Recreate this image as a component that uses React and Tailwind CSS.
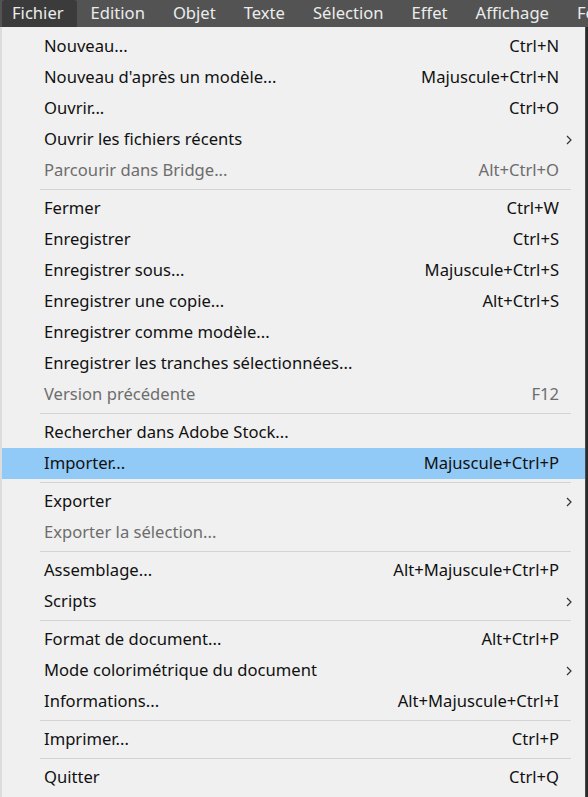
import React from "react";

const groups = [
  [
    ["Nouveau...", "Ctrl+N"],
    ["Nouveau d'après un modèle...", "Majuscule+Ctrl+N"],
    ["Ouvrir...", "Ctrl+O"],
    ["Ouvrir les fichiers récents", null, "sub"],
    ["Parcourir dans Bridge...", "Alt+Ctrl+O", "dis"],
  ],
  [
    ["Fermer", "Ctrl+W"],
    ["Enregistrer", "Ctrl+S"],
    ["Enregistrer sous...", "Majuscule+Ctrl+S"],
    ["Enregistrer une copie...", "Alt+Ctrl+S"],
    ["Enregistrer comme modèle..."],
    ["Enregistrer les tranches sélectionnées..."],
    ["Version précédente", "F12", "dis"],
  ],
  [
    ["Rechercher dans Adobe Stock..."],
    ["Importer...", "Majuscule+Ctrl+P", "hl"],
  ],
  [
    ["Exporter", null, "sub"],
    ["Exporter la sélection...", null, "dis"],
  ],
  [
    ["Assemblage...", "Alt+Majuscule+Ctrl+P"],
    ["Scripts", null, "sub"],
  ],
  [
    ["Format de document...", "Alt+Ctrl+P"],
    ["Mode colorimétrique du document", null, "sub"],
    ["Informations...", "Alt+Majuscule+Ctrl+I"],
  ],
  [["Imprimer...", "Ctrl+P"]],
  [["Quitter", "Ctrl+Q"]],
];

const menus = ["Fichier", "Edition", "Objet", "Texte", "Sélection", "Effet", "Affichage", "Fenêtre"];

function Chevron() {
  return (
    <svg width="8" height="12" viewBox="0 0 8 12" className="block">
      <path d="M2 2 L6 6 L2 10" fill="none" stroke="#333" strokeWidth="1.2" />
    </svg>
  );
}

function Row({ label, sc, kind }) {
  const dis = kind === "dis";
  const hl = kind === "hl";
  return (
    <div
      className={`h-[31px] flex items-center pl-[42px] pr-[26px] ${hl ? "bg-[#91c9f7]" : ""} ${dis ? "text-[#6d6d6d]" : "text-[#111]"}`}
    >
      <span className="flex-1 whitespace-nowrap">{label}</span>
      {sc && <span className="whitespace-nowrap">{sc}</span>}
      {kind === "sub" && (
        <span className="mr-[-14px]">
          <Chevron />
        </span>
      )}
    </div>
  );
}

export default function App() {
  return (
    <div
      className="w-[588px] h-[797px] bg-[#2a2a2a] overflow-hidden text-[16.6px]"
      style={{ fontFamily: '"Noto Sans", "Open Sans", sans-serif' }}
    >
      <div className="h-[27px] bg-[#535353] flex items-center pl-[2px] text-[#ececec] whitespace-nowrap overflow-hidden">
        {menus.map((m, i) => (
          <div
            key={m}
            className={`h-[27px] shrink-0 flex items-center ${i === 0 ? "bg-[#3b3b3b] pl-[10px] pr-[13px] rounded-t-[3px]" : "px-[14px]"}`}
          >
            {m}
          </div>
        ))}
      </div>
      <div className="w-[586px] bg-[#f0f0f0] border-r border-[#4a4a4a] border-l-2 border-l-[#dcdcdc] pt-[4px] pb-[4px]">
        {groups.map((g, gi) => (
          <div key={gi}>
            {gi > 0 && (
              <div className="h-[7px] flex items-center pl-[38px] pr-[14px]">
                <div className="h-px w-full bg-[#d4d4d4]" />
              </div>
            )}
            {g.map(([l, s, k]) => (
              <Row key={l} label={l} sc={s} kind={k} />
            ))}
          </div>
        ))}
      </div>
    </div>
  );
}
